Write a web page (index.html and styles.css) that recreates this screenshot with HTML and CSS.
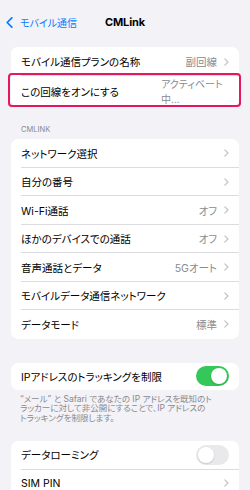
FILE: index.html
```html
<!DOCTYPE html>
<html lang="ja">
<head>
<meta charset="utf-8">
<title>CMLink</title>
<link rel="stylesheet" href="styles.css">
</head>
<body>
<div class="screen">
  <header class="nav">
    <div class="back">
      <svg class="back-icon" width="7" height="11" viewBox="0 0 7 11"><polyline points="5.8,0.8 1.2,5.5 5.8,10.2" fill="none" stroke="#0a7aff" stroke-width="1.7" stroke-linecap="round" stroke-linejoin="round"/></svg>
      <span>モバイル通信</span>
    </div>
    <div class="title">CMLink</div>
    <div></div>
  </header>

  <section class="group g1">
    <div class="card">
      <div class="row sep">
        <span class="label">モバイル通信プランの名称</span>
        <span class="value">副回線</span>
        <svg class="chev" width="5" height="8" viewBox="0 0 5 8"><polyline points="0.8,0.8 4,4 0.8,7.2" fill="none" stroke="#c4c4c7" stroke-width="1.2" stroke-linecap="round" stroke-linejoin="round"/></svg>
      </div>
      <div class="row tall">
        <span class="label">この回線をオンにする</span>
        <span class="value wrap">アクティベート<br>中...</span>
      </div>
    </div>
    <div class="highlight"></div>
  </section>

  <div class="section-header">CMLINK</div>
  <section class="group">
    <div class="card">
      <div class="row sep"><span class="label">ネットワーク選択</span><span class="value"></span><svg class="chev" width="5" height="8" viewBox="0 0 5 8"><polyline points="0.8,0.8 4,4 0.8,7.2" fill="none" stroke="#c4c4c7" stroke-width="1.2" stroke-linecap="round" stroke-linejoin="round"/></svg></div>
      <div class="row sep"><span class="label">自分の番号</span><span class="value"></span><svg class="chev" width="5" height="8" viewBox="0 0 5 8"><polyline points="0.8,0.8 4,4 0.8,7.2" fill="none" stroke="#c4c4c7" stroke-width="1.2" stroke-linecap="round" stroke-linejoin="round"/></svg></div>
      <div class="row sep"><span class="label">Wi-Fi通話</span><span class="value">オフ</span><svg class="chev" width="5" height="8" viewBox="0 0 5 8"><polyline points="0.8,0.8 4,4 0.8,7.2" fill="none" stroke="#c4c4c7" stroke-width="1.2" stroke-linecap="round" stroke-linejoin="round"/></svg></div>
      <div class="row sep"><span class="label">ほかのデバイスでの通話</span><span class="value">オフ</span><svg class="chev" width="5" height="8" viewBox="0 0 5 8"><polyline points="0.8,0.8 4,4 0.8,7.2" fill="none" stroke="#c4c4c7" stroke-width="1.2" stroke-linecap="round" stroke-linejoin="round"/></svg></div>
      <div class="row sep"><span class="label">音声通話とデータ</span><span class="value">5Gオート</span><svg class="chev" width="5" height="8" viewBox="0 0 5 8"><polyline points="0.8,0.8 4,4 0.8,7.2" fill="none" stroke="#c4c4c7" stroke-width="1.2" stroke-linecap="round" stroke-linejoin="round"/></svg></div>
      <div class="row sep"><span class="label">モバイルデータ通信ネットワーク</span><span class="value"></span><svg class="chev" width="5" height="8" viewBox="0 0 5 8"><polyline points="0.8,0.8 4,4 0.8,7.2" fill="none" stroke="#c4c4c7" stroke-width="1.2" stroke-linecap="round" stroke-linejoin="round"/></svg></div>
      <div class="row"><span class="label">データモード</span><span class="value">標準</span><svg class="chev" width="5" height="8" viewBox="0 0 5 8"><polyline points="0.8,0.8 4,4 0.8,7.2" fill="none" stroke="#c4c4c7" stroke-width="1.2" stroke-linecap="round" stroke-linejoin="round"/></svg></div>
    </div>
  </section>

  <section class="group g3">
    <div class="card">
      <div class="row toggle-row">
        <span class="label">IPアドレスのトラッキングを制限</span>
        <span class="toggle on"><span class="knob"></span></span>
      </div>
    </div>
  </section>
  <p class="footer">“メール” と Safari であなたの IP アドレスを既知のト<br>ラッカーに対して非公開にすることで、IP アドレスの<br>トラッキングを制限します。</p>

  <section class="group g4">
    <div class="card">
      <div class="row sep toggle-row">
        <span class="label">データローミング</span>
        <span class="toggle"><span class="knob"></span></span>
      </div>
      <div class="row"><span class="label">SIM PIN</span><span class="value"></span><svg class="chev" width="5" height="8" viewBox="0 0 5 8"><polyline points="0.8,0.8 4,4 0.8,7.2" fill="none" stroke="#c4c4c7" stroke-width="1.2" stroke-linecap="round" stroke-linejoin="round"/></svg></div>
    </div>
  </section>
</div>
</body>
</html>
```
FILE: styles.css
```css
* { box-sizing: border-box; }
html, body {
  margin: 0;
  padding: 0;
  background: #f2f2f7;
}
body {
  font-family: "Inter", "Noto Sans CJK JP", "Noto Sans", sans-serif;
  font-feature-settings: "palt";
  color: #000;
  -webkit-font-smoothing: antialiased;
}
.screen {
  width: 250px;
  height: 490px;
  overflow: hidden;
}
.nav {
  height: 44px;
  display: grid;
  grid-template-columns: 1fr auto 1fr;
  align-items: center;
}
.back {
  display: flex;
  align-items: center;
  gap: 7px;
  padding-left: 6px;
  color: #0a7aff;
  font-size: 10px;
}
.back-icon { display: block; }
.title {
  font-size: 11px;
  font-weight: 700;
  letter-spacing: -0.1px;
}
.group {
  position: relative;
  margin: 0 11px;
}
.g1 { margin-top: 3px; }
.card {
  background: #fff;
  border-radius: 7px;
  overflow: hidden;
}
.row {
  position: relative;
  display: flex;
  align-items: center;
  height: 28.5px;
  padding: 0 10px 0 10px;
  font-size: 10.5px;
}
.g1 .row { height: 29px; }
.g1 .row.tall { height: 31px; }
.row.sep::after {
  content: "";
  position: absolute;
  left: 10px;
  right: 0;
  bottom: 0;
  height: 0.6px;
  background: #dcdce0;
}
.label {
  flex: 1;
  white-space: nowrap;
}
.value {
  color: #8a8a8e;
  margin-right: 7px;
  white-space: nowrap;
}
.value.wrap {
  width: 68px;
  margin-right: 0;
  line-height: 15px;
  font-size: 10px;
}
.chev { display: block; flex: none; }
.highlight {
  position: absolute;
  left: -3px;
  right: -2px;
  top: 26px;
  height: 34px;
  border: 2px solid #e5175f;
  border-radius: 4px;
}
.section-header {
  margin: 18px 21px 4px;
  height: 10px;
  line-height: 10px;
  font-size: 7.5px;
  color: #8a8a8e;
}
.g3 { margin-top: 24px; }
.g3 .row { height: 27px; }
.toggle-row { padding-right: 10px; }
.toggle {
  position: relative;
  width: 33px;
  height: 20px;
  border-radius: 10px;
  background: #e9e9eb;
  flex: none;
}
.toggle.on { background: #34c759; }
.knob {
  position: absolute;
  top: 2px;
  left: 2px;
  width: 16px;
  height: 16px;
  border-radius: 50%;
  background: #fff;
  box-shadow: 0 1px 2px rgba(0,0,0,0.15);
}
.toggle.on .knob { left: 15px; }
.footer {
  margin: 5px 10px 0 20px;
  font-size: 8.5px;
  line-height: 9.7px;
  color: #8a8a8e;
  white-space: nowrap;
}
.g4 { margin-top: 17px; }
```
